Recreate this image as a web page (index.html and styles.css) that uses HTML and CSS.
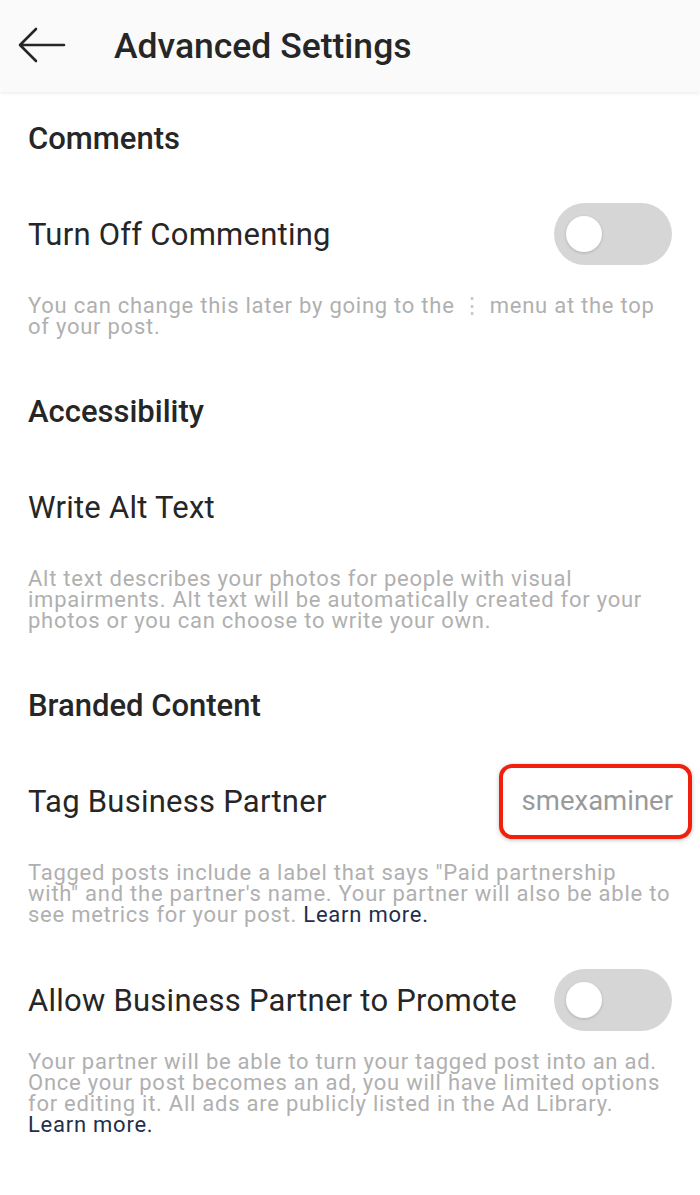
FILE: index.html
```html
<!DOCTYPE html>
<html lang="en">
<head>
<meta charset="utf-8">
<title>Advanced Settings</title>
<link rel="stylesheet" href="styles.css">
</head>
<body>
<header class="topbar">
  <span class="back" aria-label="Back">
    <svg width="48" height="36" viewBox="0 0 48 36"><path d="M46 18H3M18 2L2 18l16 16" fill="none" stroke="#262626" stroke-width="2.6" stroke-linecap="round" stroke-linejoin="round"/></svg>
  </span>
  <h1 class="title">Advanced Settings</h1>
</header>
<main class="content">
  <h2 class="sec-title first">Comments</h2>
  <div class="row">
    <span class="label">Turn Off Commenting</span>
    <span class="toggle"><span class="knob"></span></span>
  </div>
  <p class="desc">You can change this later by going to the <span class="dots">⋮</span> menu at the top of your post.</p>

  <h2 class="sec-title">Accessibility</h2>
  <div class="row">
    <span class="label">Write Alt Text</span>
  </div>
  <p class="desc">Alt text describes your photos for people with visual impairments. Alt text will be automatically created for your photos or you can choose to write your own.</p>

  <h2 class="sec-title">Branded Content</h2>
  <div class="row">
    <span class="label">Tag Business Partner</span>
    <span class="partner">smexaminer</span>
  </div>
  <p class="desc">Tagged posts include a label that says "Paid partnership with" and the partner's name. Your partner will also be able to see metrics for your post. <a class="learn">Learn more.</a></p>

  <div class="row after-desc">
    <span class="label">Allow Business Partner to Promote</span>
    <span class="toggle"><span class="knob"></span></span>
  </div>
  <p class="desc close">Your partner will be able to turn your tagged post into an ad. Once your post becomes an ad, you will have limited options for editing it. All ads are publicly listed in the Ad Library. <a class="learn">Learn more.</a></p>
</main>
</body>
</html>
```
FILE: styles.css
```css
* { box-sizing: border-box; }
html, body { margin: 0; padding: 0; background: #ffffff; }
body {
  font-family: Roboto, "Liberation Sans", Arial, sans-serif;
  color: #262626;
  width: 700px;
  height: 1195px;
  overflow: hidden;
}
.topbar {
  height: 92px;
  background: #fafafa;
  display: flex;
  align-items: center;
  padding-left: 18px;
  box-shadow: 0 1px 4px rgba(0,0,0,0.09);
  position: relative;
}
.back { display: flex; width: 48px; height: 36px; margin-top: -2px; }
.title {
  margin: 0 0 0 48px;
  font-size: 35.5px;
  font-weight: 500;
  color: #262626;
}
.content { padding: 0 28px; }
.sec-title {
  margin: 50px 0 0;
  height: 50px;
  line-height: 50px;
  font-size: 31px;
  font-weight: 500;
  color: #262626;
}
.sec-title.first { margin-top: 22px; }
.row {
  margin-top: 38px;
  height: 64px;
  display: flex;
  align-items: center;
  justify-content: space-between;
}
.row.after-desc { margin-top: 43px; }
.label { font-size: 31px; letter-spacing: 0.25px; font-weight: 400; color: #262626; }
.toggle {
  width: 118px;
  height: 62px;
  border-radius: 31px;
  background: #d6d6d6;
  display: flex;
  align-items: center;
  padding-left: 12px;
}
.knob {
  width: 36px;
  height: 36px;
  border-radius: 50%;
  background: #ffffff;
  box-shadow: 0 1px 3px rgba(0,0,0,0.18);
}
.partner {
  font-size: 27.5px;
  color: #9a9a9a;
  padding: 16px 15px 18px 19px;
  margin-right: -20px;
  border: 4.5px solid #f0200c;
  border-radius: 13px;
  box-shadow: 0 1px 4px rgba(0,0,0,0.25);
}
.desc {
  margin: 29px 0 0;
  font-size: 22px;
  letter-spacing: 0.75px;
  line-height: 21px;
  color: #b0b0b0;
}
.desc.close { margin-top: 19px; }
.dots { color: #c8c8c8; }
.learn { color: #1e2f4d; text-decoration: none; }
```
